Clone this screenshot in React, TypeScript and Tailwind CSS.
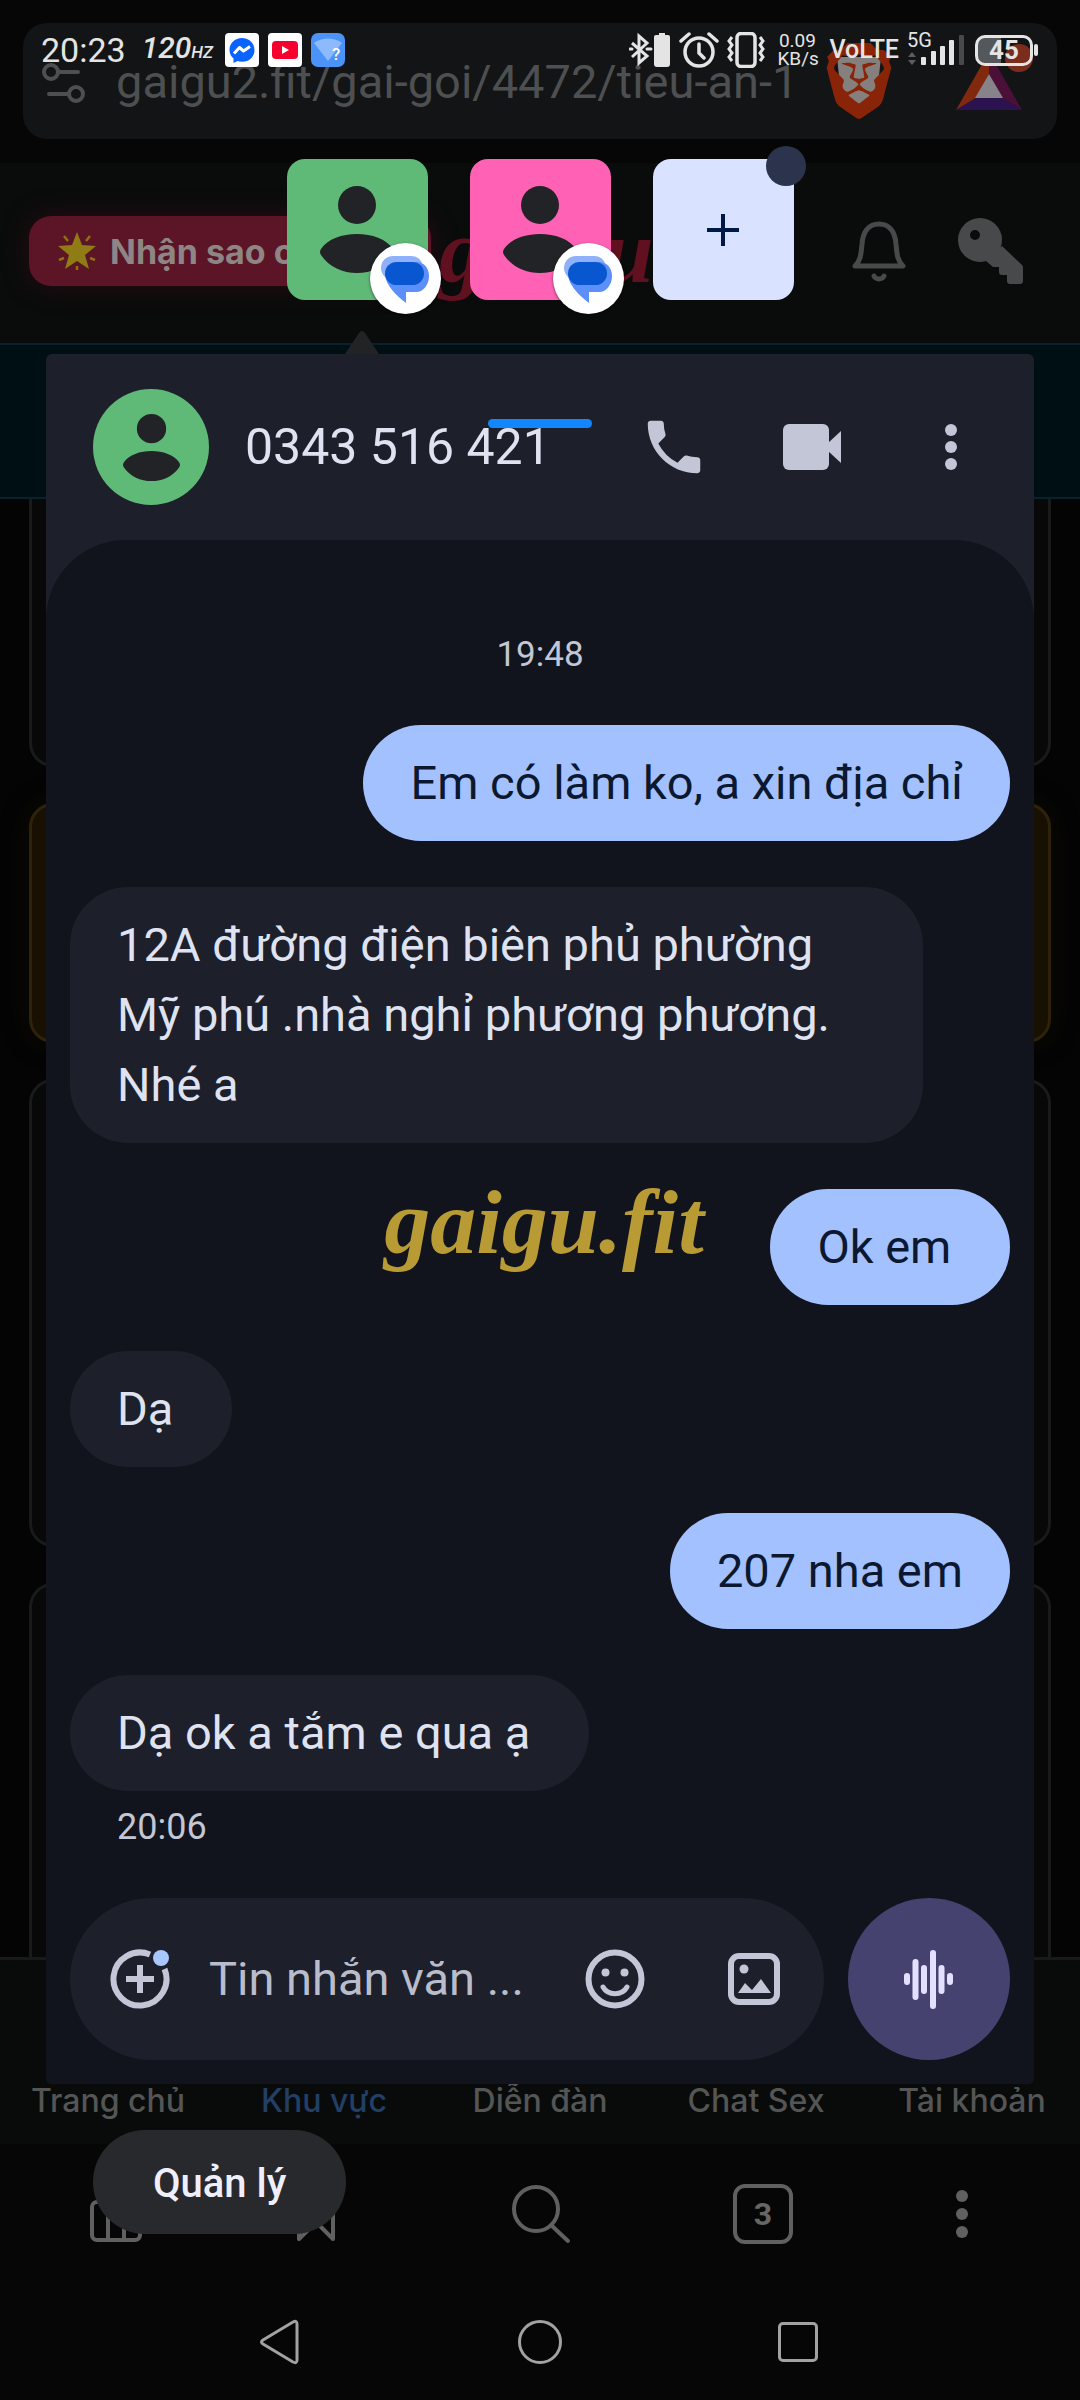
import React from "react";
import { SiBrave } from "react-icons/si";

const ROBOTO = "font-['Roboto',sans-serif]";
const INTER = "font-['Inter',sans-serif]";

function Person({ className }: { className: string }) {
  return (
    <svg viewBox="0 0 74 87" className={className} fill="#222327" aria-hidden="true">
      <circle cx="37" cy="19" r="19" />
      <path d="M1 63C14 43 60 43 73 63Q75 66 73 69C57 93 17 93 1 69Q-1 66 1 63Z" />
    </svg>
  );
}

function MessagesBadge() {
  return (
    <span className="absolute -right-[13px] -bottom-[14px] flex h-[71px] w-[71px] items-center justify-center rounded-full bg-white shadow-[0_1px_3px_#0008]">
      <svg viewBox="0 0 48 48" className="h-12 w-12" aria-hidden="true">
        <path d="M12 1h18c6 0 9 3 11 7L4 22C1 19 0 16 0 13 0 6 5 1 12 1Z" fill="#8fb0fb" />
        <path d="M35 7c8 0 13 6 13 14S43 37 35 37H25v11C16 41 5 31 4 20z" fill="#5c8ff8" />
        <rect x="4" y="7" width="39" height="23" rx="11.500" fill="#0957d0" />
      </svg>
    </span>
  );
}

function StatusBar() {
  return (
    <header className={`${ROBOTO} flex h-9 items-center pr-[42px] pl-[41px] text-[#e4e4e4]`}>
      <time className="text-[34px] leading-9">20:23</time>
      <span className="ml-4 flex items-baseline leading-9 font-medium italic">
        <span className="text-[30px]">120</span>
        <span className="text-[17px]">HZ</span>
      </span>
      <div className="ml-3 flex items-center gap-[9px]">
        <svg viewBox="0 0 34 34" className="h-[34px] w-[34px]" aria-label="Messenger">
          <rect width="34" height="34" rx="4" fill="#fff" />
          <path d="M17 5C9.800 5 4.500 10 4.500 17c0 3.500 1.500 6.500 4 8.500V30l4-2c1.500.5 3 .8 4.500.8C24.200 28.800 29.500 24 29.500 17S24.200 5 17 5Z" fill="#0a62ff" />
          <path d="M9 20.500l5.500-6 4 3.500 6.500-4.500" fill="none" stroke="#fff" strokeWidth="3" strokeLinejoin="round" />
        </svg>
        <svg viewBox="0 0 34 34" className="h-[34px] w-[34px]" aria-label="YouTube">
          <rect width="34" height="34" rx="4" fill="#fff" />
          <rect x="4" y="8" width="26" height="18" rx="4" fill="#f6002f" />
          <path d="M14 13v8l7-4z" fill="#fff" />
        </svg>
        <svg viewBox="0 0 34 34" className="h-[34px] w-[34px]" aria-label="Wi-Fi">
          <rect width="34" height="34" rx="7" fill="#4b93f8" />
          <path d="M3 10C10 4 24 4 31 10L17 28Z" fill="#8cbafb" />
          <text x="21" y="27" fontSize="17" fontWeight="500" fill="#fff" fontFamily="Roboto, sans-serif">?</text>
        </svg>
      </div>
      <div className="ml-auto flex items-center">
        <svg viewBox="0 0 42 36" className="h-9 w-[42px]" fill="none" stroke="#e4e4e4" strokeWidth="3" aria-label="Bluetooth">
          <path d="M3 11l15 13-8 7V4l8 7L3 25" />
          <path d="M1 17h2M18 17h4" strokeLinecap="round" />
          <path d="M30 1h6v2h3q2 0 2 2v27q0 3-3 3h-10q-3 0-3-3V5q0-2 2-2h3z" fill="#e4e4e4" stroke="none" />
        </svg>
        <svg viewBox="0 0 40 36" className="ml-2 h-9 w-10" fill="none" stroke="#e4e4e4" strokeWidth="3.500" strokeLinecap="round" aria-label="Alarm">
          <circle cx="20" cy="20" r="14" />
          <path d="M20 12v9l5 5M2 9l8-7M38 9l-8-7" />
        </svg>
        <svg viewBox="0 0 38 36" className="ml-2 h-9 w-[38px]" fill="none" stroke="#e4e4e4" strokeWidth="3" aria-label="Vibrate">
          <rect x="10" y="1.500" width="18" height="33" rx="4" strokeWidth="3.500" />
          <path d="M5 5l-3 4 3 4-3 4 3 4-3 4 3 4M33 5l3 4-3 4 3 4-3 4 3 4-3 4" />
        </svg>
        <span className="ml-3 w-10 text-center text-[19px] leading-[18px]">
          0.09
          <br />
          KB/s
        </span>
        <span className="ml-3 text-[25px] leading-9 font-medium">VoLTE</span>
        <div className="relative ml-2 h-9 w-[58px]">
          <span className="absolute top-0 left-0 text-[20px] leading-4">5G</span>
          <svg viewBox="0 0 58 36" className="h-9 w-[58px]" fill="#e4e4e4" aria-label="Signal">
            <path d="M5 20l4 5H1zM5 33l4-5H1z" fill="#5c5d5e" />
            <rect x="14" y="25" width="5" height="8" rx="1" />
            <rect x="24" y="19" width="5" height="14" rx="1" />
            <rect x="33" y="14" width="5" height="19" rx="1" />
            <rect x="42" y="8" width="5" height="25" rx="1" />
            <rect x="52" y="3" width="5" height="30" rx="1" fill="#48494a" />
          </svg>
        </div>
        <div className="ml-[10px] flex items-center">
          <span className="flex h-[31px] w-[58px] items-center justify-center rounded-[10px] border-[3px] border-[#e4e4e4] bg-linear-to-r from-[#55585a] from-45% to-transparent to-45% text-[26px] leading-7 font-bold">
            45
          </span>
          <span className="ml-px h-3 w-1 rounded-sm bg-[#e4e4e4]" />
        </div>
      </div>
    </header>
  );
}

function AddressBar() {
  return (
    <div className="bg-[#060606] px-[23px] pt-[23px] pb-6">
      <div className={`${ROBOTO} flex h-[116px] items-start rounded-[24px] bg-[#131415] pr-[22px] pl-[18px] text-[#4d4f50]`}>
        <svg viewBox="0 0 46 40" className="mt-10 h-10 w-[46px]" fill="none" stroke="#4d4f50" strokeWidth="4" strokeLinecap="round" aria-hidden="true">
          <circle cx="10" cy="9" r="7" />
          <path d="M18 9h19M8 31h19" />
          <circle cx="35" cy="31" r="7" />
        </svg>
        <a href="#site" className="ml-[29px] pt-8 text-[47px] leading-[54px] whitespace-nowrap">
          gaigu2.fit/gai-goi/4472/tieu-an-1
        </a>
        <div className="relative mt-5 ml-auto h-[76px] w-[76px] shrink-0">
          <svg viewBox="0 0 76 76" className="absolute inset-0 h-[76px] w-[76px]" aria-hidden="true">
            <path d="M16 14h44l-4 38-18 14-18-14z" fill="#85807e" />
          </svg>
          <SiBrave className="relative h-[76px] w-[76px] text-[#8a2409]" aria-label="Brave" />
        </div>
        <svg viewBox="0 0 80 76" className="mt-5 ml-[58px] h-[76px] w-20 shrink-0" aria-label="BAT">
          <path d="M34 9L1 67l20-12 13-24z" fill="#81290f" />
          <path d="M34 9l33 58-20-12-13-24z" fill="#4b1038" />
          <path d="M1 67h66L47 55H21z" fill="#2d1250" />
          <path d="M34 31l14 24H20z" fill="#88828a" />
          <circle cx="64" cy="15" r="14" fill="#7a2c1d" />
        </svg>
      </div>
    </div>
  );
}

function SiteHeader() {
  return (
    <div className="flex h-[182px] items-center border-b-2 border-[#06222a] bg-[#0a0c0b] pr-14 pb-1 pl-[29px]">
      <button className={`${INTER} flex h-[70px] w-[402px] shrink-0 items-center rounded-[22px] bg-[#5c1526] pl-7 text-[34px] font-bold whitespace-nowrap text-[#8d8685] shadow-[0_0_24px_#2a0c14]`}>
        <svg viewBox="0 0 40 40" className="mr-[13px] h-10 w-10" aria-hidden="true">
          <path d="M20 1l5 13 14 1-11 9 4 14-12-8-12 8 4-14L1 15l14-1z" fill="#8f7c14" />
          <path d="M7 5l4 5M33 5l-4 5M2 29l5-2M38 29l-5-2M20 35v4" stroke="#8f6f12" strokeWidth="2.500" />
        </svg>
        Nhận sao c
      </button>
      <a href="#home" className="ml-2 font-['Liberation_Serif',serif] text-[92px] leading-[92px] font-bold text-[#611020] italic">
        gaigu
      </a>
      <div className="ml-auto flex items-center gap-[52px]">
        <button aria-label="Thông báo">
          <svg viewBox="0 0 54 62" className="h-[62px] w-[54px]" fill="none" stroke="#48494b" strokeWidth="5" strokeLinecap="round" strokeLinejoin="round">
            <path d="M3 46C9 40 9 34 10 24 11 11 17 4 27 4s16 7 17 20c1 10 1 16 7 22z" />
            <path d="M22 56c2 4 8 4 10 0" />
          </svg>
        </button>
        <button aria-label="Tài khoản của tôi">
          <svg viewBox="0 0 66 66" className="h-[66px] w-[66px]" fill="#48494b" fillRule="evenodd">
            <path d="M22 0a22 22 0 1 1 0 44A22 22 0 0 1 22 0ZM17 12a5 5 0 1 0 0 10 5 5 0 0 0 0-10Z" />
            <path d="M44 28l20 19q1 1 1 3v13q0 3-3 3H52q-3 0-3-3v-6h-5q-3 0-3-3v-5h-6L28 43z" />
          </svg>
        </button>
      </div>
    </div>
  );
}

function BrowserPage() {
  return (
    <div className="col-start-1 row-start-1 flex min-h-[2400px] flex-col bg-[#040404]">
      <AddressBar />
      <SiteHeader />
      <div className="h-[154px] shrink-0 border-b-2 border-[#06222a] bg-[#000f14]" />
      <div className="flex flex-1 flex-col gap-9 px-[29px]">
        <div className="h-[268px] rounded-b-3xl border-[3px] border-t-0 border-[#191a1a] bg-[#070807]" />
        <div className="h-[240px] rounded-3xl border-[3px] border-[#2e230a] bg-[#181000] shadow-[0_0_24px_#0d0b03]" />
        <div className="h-[468px] rounded-3xl border-[3px] border-[#191a1a] bg-[#070807]" />
        <div className="flex-1 rounded-t-3xl border-[3px] border-b-0 border-[#191a1a] bg-[#070807]" />
      </div>
      <nav className={`${INTER} grid h-[187px] grid-cols-5 items-end border-t-[3px] border-[#181919] bg-[#090b0a] pb-[23px] text-center text-[32px] leading-10 font-medium text-[#545555]`}>
        <a href="#home">Trang chủ</a>
        <a href="#area" className="text-[#223f67]">Khu vực</a>
        <a href="#forum">Diễn đàn</a>
        <a href="#chat">Chat Sex</a>
        <a href="#account">Tài khoản</a>
      </nav>
      <div className="grid h-[140px] grid-cols-[232fr_168fr_282fr_162fr_236fr] place-items-center bg-[#060606]">
        <button aria-label="Thư viện">
          <svg viewBox="0 0 52 60" className="h-[60px] w-[52px]" fill="none" stroke="#606060" strokeWidth="4">
            <rect x="2" y="18" width="48" height="38" rx="5" />
            <path d="M18 30v26M34 30v26" />
          </svg>
        </button>
        <button aria-label="Dấu trang">
          <svg viewBox="0 0 38 60" className="h-[60px] w-[38px]" fill="none" stroke="#606060" strokeWidth="4" strokeLinejoin="round">
            <path d="M2 4h34v51L19 38 2 55z" />
          </svg>
        </button>
        <button aria-label="Tìm kiếm">
          <svg viewBox="0 0 60 60" className="h-[60px] w-[60px]" fill="none" stroke="#606060" strokeWidth="4" strokeLinecap="round">
            <circle cx="25" cy="25" r="22" />
            <path d="M40 41l17 16" />
          </svg>
        </button>
        <button className={`${ROBOTO} flex h-[60px] w-[60px] items-center justify-center rounded-[12px] border-4 border-[#606060] text-[32px] font-bold text-[#666]`}>
          3
        </button>
        <button aria-label="Trình đơn">
          <svg viewBox="0 0 48 60" className="h-[60px] w-12" fill="#606060">
            <circle cx="24" cy="12" r="6" />
            <circle cx="24" cy="30" r="6" />
            <circle cx="24" cy="48" r="6" />
          </svg>
        </button>
      </div>
      <div className="flex h-[116px] items-center justify-center gap-[216px] bg-[#060606] pr-1">
        <button aria-label="Quay lại">
          <svg viewBox="0 0 44 46" className="h-[46px] w-11" fill="none" stroke="#a2a2a2" strokeWidth="3" strokeLinejoin="round">
            <path d="M35 3q4-2 4 2v36q0 4-4 2L5 25q-3-2 0-4z" />
          </svg>
        </button>
        <button aria-label="Màn hình chính" className="h-11 w-11 rounded-full border-[3px] border-[#a2a2a2]" />
        <button aria-label="Gần đây" className="h-10 w-10 rounded-[5px] border-[3px] border-[#a2a2a2]" />
      </div>
    </div>
  );
}

function BubbleTabs() {
  return (
    <div className="mt-[91px] flex justify-center gap-[42px]">
      <button aria-label="0343 516 421" className="relative flex h-[141px] w-[141px] items-center justify-center rounded-[18px] bg-[#5fb977]">
        <Person className="h-[87px] w-[74px]" />
        <MessagesBadge />
        <svg viewBox="0 0 34 24" className="absolute top-[171px] left-[58px] h-6 w-[34px]" fill="#222325" aria-hidden="true">
          <path d="M0 24L14 3q3-4 6 0l14 21z" />
        </svg>
      </button>
      <button aria-label="Cuộc trò chuyện khác" className="relative flex h-[141px] w-[141px] items-center justify-center rounded-[18px] bg-[#ff62b5]">
        <Person className="h-[87px] w-[74px]" />
        <MessagesBadge />
      </button>
      <button aria-label="Thêm" className="relative flex h-[141px] w-[141px] items-center justify-center rounded-[18px] bg-[#d9e2ff]">
        <svg viewBox="0 0 32 32" className="h-8 w-8" stroke="#001946" strokeWidth="4" aria-hidden="true">
          <path d="M16 0v32M0 16h32" />
        </svg>
        <span className="absolute -top-[13px] -right-3 h-10 w-10 rounded-full bg-[#2b344c]" />
      </button>
    </div>
  );
}

type Message = { out?: boolean; text: string };

const messages: Message[] = [
  { out: true, text: "Em có làm ko, a xin địa chỉ" },
  { text: "12A đường điện biên phủ phường Mỹ phú .nhà nghỉ phương phương. Nhé a" },
  { out: true, text: "Ok em\u00a0" },
  { text: "Dạ\u00a0" },
  { out: true, text: "207 nha em" },
  { text: "Dạ ok a tắm e qua ạ\u00a0" },
];

function ChatPanel() {
  return (
    <section className={`${ROBOTO} mx-[46px] mt-[54px] overflow-hidden rounded-md bg-[#1d1f2a]`}>
      <div className="relative flex h-[186px] items-center pr-[51px] pl-[47px] text-[#dfe2f0]">
        <span className="flex h-[116px] w-[116px] items-center justify-center rounded-full bg-[#5fb977]">
          <Person className="h-[67px] w-[57px]" />
        </span>
        <h1 className="ml-9 flex-1 text-[50px] leading-[60px]">0343 516 421</h1>
        <span className="absolute top-[65px] left-[442px] h-[9px] w-[104px] rounded-full bg-[#1287fd]" />
        <div className="flex gap-[75px]">
          <button aria-label="Gọi">
            <svg viewBox="0 0 24 24" className="-mr-1 h-[70px] w-[70px]" fill="#c3c6d6">
              <path d="M20 15.500c-1.250 0-2.450-.2-3.570-.57-.35-.11-.74-.03-1.020.24l-2.200 2.200a15.050 15.050 0 0 1-6.590-6.590l2.200-2.210c.28-.26.36-.65.25-1A11.400 11.400 0 0 1 8.500 4c0-.55-.45-1-1-1H4c-.55 0-1 .45-1 1 0 9.390 7.610 17 17 17 .55 0 1-.45 1-1v-3.500c0-.55-.45-1-1-1Z" />
            </svg>
          </button>
          <button aria-label="Gọi video">
            <svg viewBox="0 0 64 64" className="h-16 w-16" fill="#c3c6d6">
              <rect x="3" y="9" width="46" height="46" rx="6" />
              <path d="M48 28l13-12v32L48 36z" />
            </svg>
          </button>
          <button aria-label="Tùy chọn khác">
            <svg viewBox="0 0 64 64" className="h-16 w-16" fill="#c3c6d6">
              <circle cx="32" cy="15" r="6" />
              <circle cx="32" cy="32" r="6" />
              <circle cx="32" cy="49" r="6" />
            </svg>
          </button>
        </div>
      </div>
      <div className="relative rounded-t-[80px] bg-[#11141c] px-6 pt-[93px] pb-6">
        <time className="block text-center text-[35px] leading-[44px] text-[#c3c6d4]">19:48</time>
        <ol className="mt-12 flex flex-col gap-[46px] text-[47px] leading-[70px]">
          {messages.map((m) => (
            <li
              key={m.text}
              className={
                m.out
                  ? "max-w-[853px] self-end rounded-[58px] bg-[#a3c1ff] px-[47px] py-[23px] text-[#0b1830]"
                  : "max-w-[853px] self-start rounded-[58px] bg-[#1d1f2a] px-[47px] py-[23px] text-[#dfe2f0]"
              }
            >
              {m.text}
            </li>
          ))}
        </ol>
        <span className="absolute top-[636px] left-1/2 ml-1 -translate-x-1/2 font-['Liberation_Serif',serif] text-[92px] leading-[92px] font-bold text-[#b89b34] italic">
          gaigu.fit
        </span>
        <time className="mt-[14px] block pl-[47px] text-[36px] leading-[44px] text-[#c3c6d4]">20:06</time>
        <form className="mt-[49px] flex gap-6" onSubmit={(e) => e.preventDefault()}>
          <div className="flex h-[162px] min-w-0 flex-1 items-center rounded-full bg-[#1d1f2a] pr-[43px] pl-[39px]">
            <button type="button" aria-label="Đính kèm" className="shrink-0">
              <svg viewBox="0 0 62 62" className="h-[62px] w-[62px]" fill="none" stroke="#c3c6d6" strokeWidth="6">
                <path d="M41 6.500A26.500 26.500 0 1 0 55.500 21" />
                <path d="M31 17v28M17 31h28" />
                <circle cx="52" cy="10" r="8" fill="#a8c7fe" stroke="none" />
              </svg>
            </button>
            <input
              aria-label="Tin nhắn"
              placeholder="Tin nhắn văn ..."
              className="ml-[38px] w-0 min-w-0 flex-1 bg-transparent text-[47px] leading-[60px] placeholder:text-[#b9bccb]"
            />
            <button type="button" aria-label="Biểu tượng cảm xúc" className="shrink-0">
              <svg viewBox="0 0 60 60" className="h-[60px] w-[60px]" fill="none" stroke="#c3c6d6" strokeWidth="6">
                <circle cx="30" cy="30" r="26.500" />
                <path d="M18 38c5 9 19 9 24 0" strokeWidth="5" strokeLinecap="round" />
                <circle cx="20.500" cy="23.500" r="4" fill="#c3c6d6" stroke="none" />
                <circle cx="39.500" cy="23.500" r="4" fill="#c3c6d6" stroke="none" />
              </svg>
            </button>
            <button type="button" aria-label="Ảnh" className="ml-[82px] shrink-0">
              <svg viewBox="0 0 54 54" className="h-[54px] w-[54px]" fill="#c3c6d6">
                <rect x="4" y="4" width="46" height="46" rx="8" fill="none" stroke="#c3c6d6" strokeWidth="6" />
                <circle cx="17" cy="17" r="4.500" />
                <path d="M11 41l7-10 7 7 9-11 10 14z" />
              </svg>
            </button>
          </div>
          <button type="button" aria-label="Ghi âm" className="flex h-[162px] w-[162px] shrink-0 items-center justify-center rounded-full bg-[#46426f]">
            <svg viewBox="0 0 56 60" className="h-[60px] w-14" fill="none" stroke="#e4dfff" strokeWidth="6" strokeLinecap="round">
              <path d="M6 27v6M14.500 13v35M23 19v23M32 4v53M40.500 19v23M49 27v6" />
            </svg>
          </button>
        </form>
      </div>
    </section>
  );
}

export default function App() {
  return (
    <main className="grid min-h-screen grid-cols-1 overflow-hidden bg-[#040404]">
      <BrowserPage />
      <div className="relative col-start-1 row-start-1 flex flex-col pt-8">
        <StatusBar />
        <BubbleTabs />
        <ChatPanel />
        <button className={`${ROBOTO} mt-[46px] ml-[93px] h-[104px] self-start rounded-full bg-[#28292c] px-[60px] pt-1 text-[40px] font-medium text-[#efeffc]`}>
          Quản lý
        </button>
      </div>
    </main>
  );
}
